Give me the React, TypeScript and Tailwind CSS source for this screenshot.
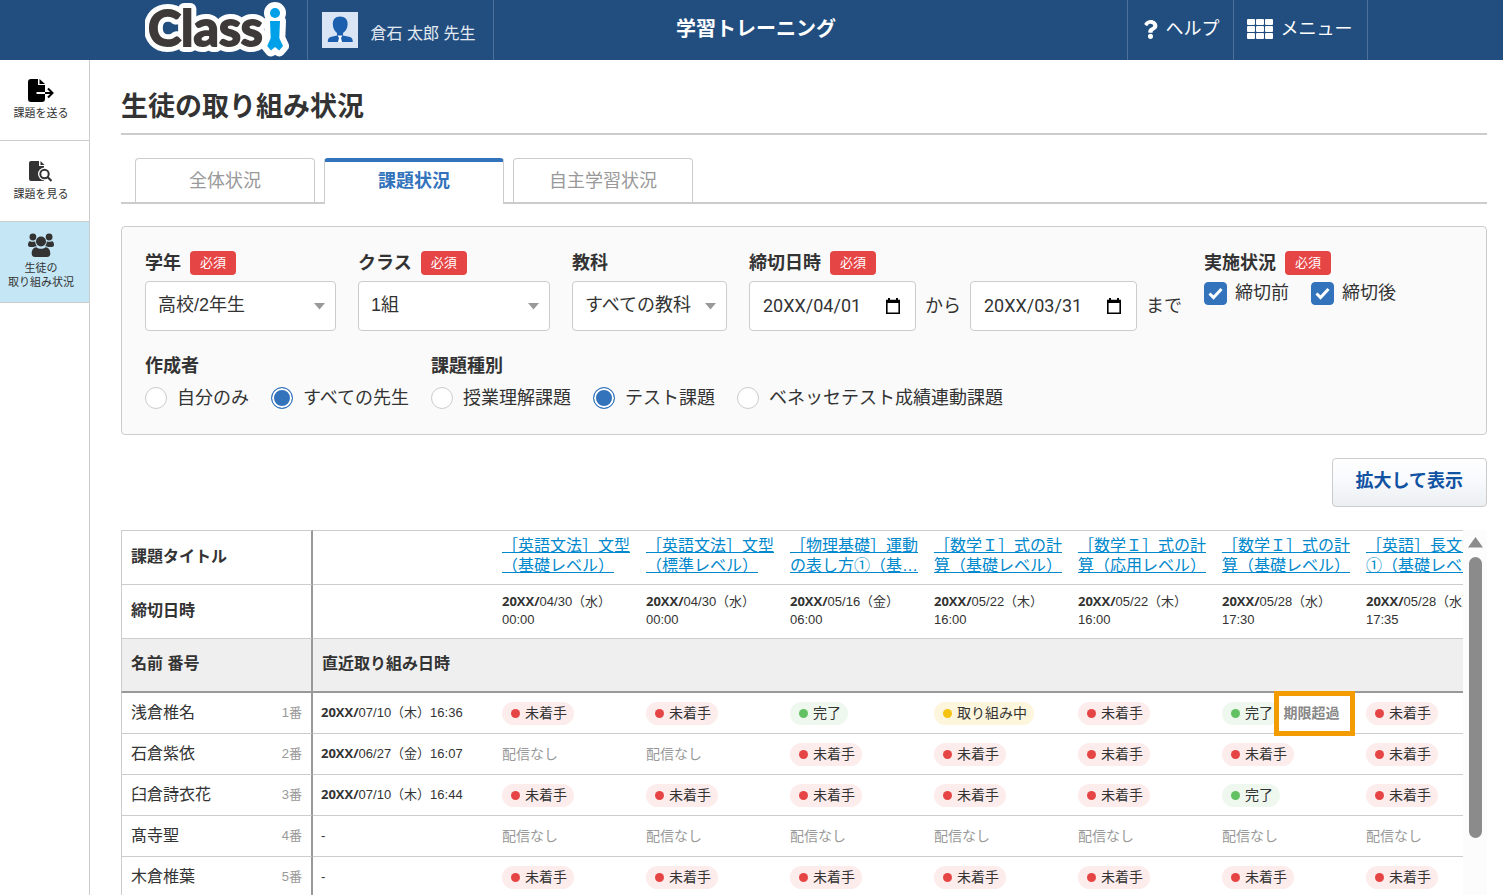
import React from 'react';
import { FaQuestion } from 'react-icons/fa';

type Status = 'todo' | 'done' | 'doing' | 'none' | 'late';

interface Task {
  title: string;
  date: string;
  time: string;
}

interface Student {
  name: string;
  no: string;
  latest: string | null;
  statuses: Status[];
}

const TASKS: Task[] = [
  { title: '［英語文法］文型（基礎レベル）', date: '04/30（水）', time: '00:00' },
  { title: '［英語文法］文型（標準レベル）', date: '04/30（水）', time: '00:00' },
  { title: '［物理基礎］運動の表し方①（基…', date: '05/16（金）', time: '06:00' },
  { title: '［数学Ｉ］式の計算（基礎レベル）', date: '05/22（木）', time: '16:00' },
  { title: '［数学Ｉ］式の計算（応用レベル）', date: '05/22（木）', time: '16:00' },
  { title: '［数学Ｉ］式の計算（基礎レベル）', date: '05/28（水）', time: '17:30' },
  { title: '［英語］長文読解①（基礎レベル）', date: '05/28（水）', time: '17:35' },
];

const STUDENTS: Student[] = [
  { name: '浅倉椎名', no: '1番', latest: '07/10（木）16:36', statuses: ['todo', 'todo', 'done', 'doing', 'todo', 'late', 'todo'] },
  { name: '石倉紫依', no: '2番', latest: '06/27（金）16:07', statuses: ['none', 'none', 'todo', 'todo', 'todo', 'todo', 'todo'] },
  { name: '臼倉詩衣花', no: '3番', latest: '07/10（木）16:44', statuses: ['todo', 'todo', 'todo', 'todo', 'todo', 'done', 'todo'] },
  { name: '髙寺聖', no: '4番', latest: null, statuses: ['none', 'none', 'none', 'none', 'none', 'none', 'none'] },
  { name: '木倉椎葉', no: '5番', latest: null, statuses: ['todo', 'todo', 'todo', 'todo', 'todo', 'todo', 'todo'] },
];

// The figure that stands in for the last letter of the logo
const FIGURE = 'M125 21h10l-.7 17 3.700 8-3.800 4.500-4.200-3.500-4 3.500-3.800-4.500 3.500-8z';

function Logo() {
  return (
    <svg width="148" height="58" viewBox="0 0 148 58" role="img" aria-label="Classi">
      <g stroke="#fff" strokeWidth="12" strokeLinejoin="round" fill="#fff">
        <text x="3" y="46" fontSize="50" fontWeight="700" fontFamily="Lato, sans-serif">Class</text>
        <circle cx="130" cy="13" r="5" />
        <path d={FIGURE} />
      </g>
      <text x="3" y="46" fontSize="50" fontWeight="700" fontFamily="Lato, sans-serif" fill="#3e3a39" stroke="#3e3a39" strokeWidth="2">Class</text>
      <g fill="#00a0e9">
        <circle cx="130" cy="13" r="5" />
        <path d={FIGURE} />
      </g>
    </svg>
  );
}

function Avatar() {
  return (
    <svg width="36" height="36" viewBox="0 0 36 36" aria-hidden="true">
      <rect width="36" height="36" fill="#d9e5f5" />
      <path d="M18 4.500c5 0 7.800 3 7.600 7.500 0 4-1.600 7-4.600 9v2.500l7 1.500c2.200.8 2.800 2.200 2.800 5H5.800c0-2.800.6-4.200 2.800-5l6.400-1.500V21c-2.600-2-4.200-5-4.200-9 0-4.500 2.400-7.500 7.200-7.500z" fill="#1b5fae" />
      <path d="M15.500 23.500h5L19 26l1 4h-4l1-4z" fill="#fff" />
    </svg>
  );
}

function MenuIcon() {
  return (
    <svg width="26" height="20" viewBox="0 0 26 20" fill="#fff" aria-hidden="true">
      {[0, 7, 14].map((y) =>
        [0, 9, 18].map((x) => <rect key={`${x}-${y}`} x={x} y={y} width="8" height="6" rx="1" />)
      )}
    </svg>
  );
}

function SendIcon() {
  return (
    <svg width="26" height="23" viewBox="0 0 26 23" aria-hidden="true">
      <path d="M3 0h7v6h7v14a3 3 0 0 1-3 3H3a3 3 0 0 1-3-3V3a3 3 0 0 1 3-3z" fill="#000" />
      <path d="M11.500 0L17 5h-5.500z" fill="#000" />
      <path d="M8.500 14H17" stroke="#fff" strokeWidth="2" />
      <path d="M17 14h7M20 9.500l4.500 4.500-4.500 4.500" stroke="#000" strokeWidth="2" fill="none" />
    </svg>
  );
}

function SearchFileIcon() {
  return (
    <svg width="24" height="21" viewBox="0 0 24 21" aria-hidden="true">
      <path d="M2 0h8v5h5v15H2a2 2 0 0 1-2-2V2a2 2 0 0 1 2-2z" fill="#333" />
      <path d="M11.500 0l4 4h-4z" fill="#333" />
      <circle cx="15.500" cy="13" r="6.500" fill="#fff" />
      <circle cx="15.500" cy="13" r="4.200" fill="none" stroke="#333" strokeWidth="2" />
      <path d="M18.500 16l4 4" stroke="#333" strokeWidth="2.200" />
    </svg>
  );
}

function GroupIcon() {
  return (
    <svg width="26" height="24" viewBox="0 0 26 24" fill="#333" aria-hidden="true">
      <circle cx="4.900" cy="4" r="3.400" />
      <circle cx="21.100" cy="4" r="3.400" />
      <path d="M2 8.200c2 .9 4 .8 5.200.1 0 2 .6 3.700 1.800 5-1.500 0-2.500.2-3.500.7H2.300C.8 14 0 13.200 0 11.800c0-1.800.6-3.600 2-3.600zM24 8.200c-2 .9-4 .8-5.200.1 0 2-.6 3.700-1.800 5 1.500 0 2.500.2 3.500.7h3.200c1.500 0 2.300-.8 2.300-2.200 0-1.800-.6-3.600-2-3.600z" />
      <circle cx="13" cy="8.500" r="5" />
      <path d="M8.500 14.200c2.800 2 6.200 2 9 0 3.400 0 4.800 3 4.800 6.600 0 2-1.300 3.200-3.300 3.200H7c-2 0-3.300-1.200-3.300-3.200 0-3.600 1.400-6.600 4.800-6.600z" />
    </svg>
  );
}

function SideItem({ icon, active, children }: { icon: React.ReactNode; active?: boolean; children: React.ReactNode }) {
  return (
    <a
      href="#"
      className={`flex h-[81px] flex-col items-center border-b border-[#ccc] pr-[7px] text-center text-[11px] leading-[14px] ${active ? 'bg-[#c5e6f5] pt-[11px]' : 'pt-[18px]'}`}
    >
      <span className="mb-1 flex h-6 items-center">{icon}</span>
      {children}
    </a>
  );
}

function Tab({ active, children }: { active?: boolean; children: React.ReactNode }) {
  return (
    <button
      type="button"
      role="tab"
      aria-selected={!!active}
      className={`w-[180px] rounded-t border-x text-[18px] leading-6 ${
        active
          ? 'h-[46px] border-x-[#ccc] border-t-4 border-t-[#3273bc] bg-white pb-1 font-bold text-[#3273bc]'
          : 'h-11 border-t border-[#ccc] text-[#999]'
      }`}
    >
      {children}
    </button>
  );
}

function Required() {
  return <span className="rounded bg-[#e64545] px-[10px] text-[13px] leading-6 font-normal text-white">必須</span>;
}

function FieldLabel({ htmlFor, required, children }: { htmlFor?: string; required?: boolean; children: React.ReactNode }) {
  const className = 'flex h-6 items-center gap-[9px] text-[18px] leading-6 font-bold';
  const content = (
    <>
      {children}
      {required && <Required />}
    </>
  );
  return htmlFor ? (
    <label htmlFor={htmlFor} className={className}>{content}</label>
  ) : (
    <span className={className}>{content}</span>
  );
}

function SelectField({ id, label, value, required, width }: { id: string; label: string; value: string; required?: boolean; width: string }) {
  return (
    <div className="flex flex-col gap-[6px]">
      <FieldLabel htmlFor={id} required={required}>{label}</FieldLabel>
      <div className="relative">
        <select id={id} className={`h-[50px] appearance-none rounded border border-[#ccc] bg-white pb-[2px] pl-3 text-[18px] ${width}`}>
          <option>{value}</option>
        </select>
        <svg className="pointer-events-none absolute top-[22px] right-[11px]" width="11" height="7" viewBox="0 0 11 7" aria-hidden="true">
          <path d="M0 0h11L5.500 6.500z" fill="#999" />
        </svg>
      </div>
    </div>
  );
}

function DateField({ label, value }: { label: string; value: string }) {
  return (
    <div className="relative">
      <input
        type="text"
        aria-label={label}
        defaultValue={value}
        className="h-[50px] w-[167px] rounded border border-[#ccc] bg-white pb-[2px] pl-[13px] font-[Roboto,'Noto_Sans_CJK_JP',sans-serif] text-[18px]"
      />
      <svg className="pointer-events-none absolute top-4 right-[15px]" width="16" height="18" viewBox="0 0 16 18" aria-hidden="true">
        <path d="M1.800 3.500h12.400v12.700H1.800z" fill="none" stroke="#000" strokeWidth="1.600" />
        <path d="M1 3h14v3H1zM3 1h2v3H3zM11 1h2v3h-2z" fill="#000" />
      </svg>
    </div>
  );
}

function CheckField({ children }: { children: React.ReactNode }) {
  return (
    <label className="flex items-center gap-2 text-[18px] leading-6">
      <span className="relative flex">
        <input type="checkbox" defaultChecked className="peer size-[23px] appearance-none rounded border border-[#ccc] bg-white checked:border-[#3273bc] checked:bg-[#3273bc]" />
        <svg className="pointer-events-none absolute inset-0 hidden peer-checked:block" width="23" height="23" viewBox="0 0 23 23" aria-hidden="true">
          <path d="M5.500 11.500l4 4 8-8.500" fill="none" stroke="#fff" strokeWidth="3" />
        </svg>
      </span>
      {children}
    </label>
  );
}

function RadioField({ name, checked, children }: { name: string; checked?: boolean; children: React.ReactNode }) {
  return (
    <label className="flex items-center gap-[10px] text-[18px] leading-6">
      <input
        type="radio"
        name={name}
        defaultChecked={checked}
        className="size-[22px] appearance-none rounded-full border border-[#ccc] bg-white checked:border-[#3273bc] checked:bg-[#3273bc] checked:shadow-[inset_0_0_0_2px_#fff]"
      />
      {children}
    </label>
  );
}

const BADGES = {
  todo: { label: '未着手', box: 'bg-[#fdecec]', dot: 'bg-[#e64545]' },
  done: { label: '完了', box: 'bg-[#eff8ef]', dot: 'bg-[#62c162]' },
  doing: { label: '取り組み中', box: 'bg-[#fdf6dc]', dot: 'bg-[#f5c211]' },
};

function StatusBadge({ status }: { status: Status }) {
  if (status === 'none') {
    return <span className="text-[14px] text-[#999]">配信なし</span>;
  }
  const badge = BADGES[status === 'late' ? 'done' : status];
  return (
    <span className="relative inline-flex align-middle">
      <span className={`inline-flex h-[23px] items-center gap-[5px] rounded-full pr-[7px] pl-[9px] text-[14px] leading-5 whitespace-nowrap ${badge.box}`}>
        <span className={`size-[9px] rounded-full ${badge.dot}`} />
        {badge.label}
      </span>
      {status === 'late' && (
        <span className="absolute -top-[11px] left-[52px] flex h-[45px] w-[81px] items-center justify-center border-[5px] border-[#f39c00] bg-white pr-[6px] text-[14px] font-bold whitespace-nowrap text-[#888]">
          期限超過
        </span>
      )}
    </span>
  );
}

function Year() {
  return <span className="font-['Open_Sans',sans-serif] font-bold">20XX/</span>;
}

function TaskTable() {
  const nameCell = 'border-r-2 border-l border-r-[#999] border-l-[#ccc] px-[9px] text-left';
  return (
    <table className="w-[1379px] table-fixed border-separate border-spacing-0">
      <colgroup>
        <col className="w-[192px]" />
        <col className="w-[179px]" />
        {TASKS.map((_, i) => (
          <col key={i} className="w-[144px]" />
        ))}
      </colgroup>
      <thead>
        <tr className="h-[55px]">
          <th className={`border-y border-y-[#ccc] pb-[2px] text-[16px] ${nameCell}`}>課題タイトル</th>
          <td className="border-y border-[#ccc]" />
          {TASKS.map((task, i) => (
            <td key={i} className="border-y border-[#ccc] pr-[6px] pb-1 pl-[10px] text-[16px] leading-5">
              <a href="#" className="line-clamp-2 text-[#0088cc] underline">{task.title}</a>
            </td>
          ))}
        </tr>
        <tr className="h-[54px]">
          <th className={`border-b border-b-[#ccc] pb-[2px] text-[16px] ${nameCell}`}>締切日時</th>
          <td className="border-b border-[#ccc]" />
          {TASKS.map((task, i) => (
            <td key={i} className="border-b border-[#ccc] pb-[2px] pl-[10px] text-[13px] leading-[18px]">
              <Year />
              {task.date}
              <br />
              {task.time}
            </td>
          ))}
        </tr>
        <tr className="h-[54px] bg-[#efefef]">
          <th className={`border-b-2 border-b-[#999] pb-[2px] text-[16px] ${nameCell}`}>名前 番号</th>
          <th colSpan={8} className="border-b-2 border-[#999] px-[9px] pb-[2px] text-left text-[16px]">直近取り組み日時</th>
        </tr>
      </thead>
      <tbody>
        {STUDENTS.map((student) => (
          <tr key={student.no} className="h-[41px]">
            <th className={`border-b border-b-[#ccc] font-normal ${nameCell}`}>
              <div className="flex items-center justify-between">
                <span className="text-[16px] leading-5">{student.name}</span>
                <span className="text-[13px] leading-5 text-[#999]">{student.no}</span>
              </div>
            </th>
            <td className="border-b border-[#ccc] pl-2 text-[13px]">
              {student.latest ? (
                <>
                  <Year />
                  {student.latest}
                </>
              ) : (
                '-'
              )}
            </td>
            {student.statuses.map((status, i) => (
              <td key={i} className="border-b border-[#ccc] pl-[10px] leading-none">
                <StatusBadge status={status} />
              </td>
            ))}
          </tr>
        ))}
      </tbody>
    </table>
  );
}

export default function App() {
  return (
    <div className="flex h-screen flex-col overflow-hidden bg-white font-['Liberation_Sans','Noto_Sans_CJK_JP',sans-serif] text-[#333]">
      <header className="h-[60px] shrink-0 bg-[#224e7f] pl-[9px] text-white">
        <div className="mx-auto grid h-full max-w-[1223px] grid-cols-[1fr_auto_1fr]">
          <div className="flex">
            <a href="#" className="w-[162px]">
              <Logo />
            </a>
            <div className="flex items-center gap-[13px] border-x border-[#4f7199] pr-[18px] pl-[14px]">
              <Avatar />
              <span className="pt-2 text-[16px] leading-5 whitespace-nowrap text-[#e3eaf2]">倉石 太郎 先生</span>
            </div>
          </div>
          <div className="flex items-center pb-[2px] text-[20px] font-bold">学習トレーニング</div>
          <nav className="flex justify-end text-[18px]">
            <a href="#" className="flex items-center gap-[6px] border-l border-[#4f7199] px-[13px] pb-[2px]">
              <FaQuestion size={19} />
              ヘルプ
            </a>
            <a href="#" className="flex items-center gap-2 border-x border-[#4f7199] pr-[14px] pl-[13px] pb-[2px]">
              <MenuIcon />
              メニュー
            </a>
          </nav>
        </div>
      </header>

      <div className="flex min-h-0 flex-1">
        <nav className="w-[90px] shrink-0 border-r border-[#ccc]">
          <SideItem icon={<SendIcon />}>課題を送る</SideItem>
          <SideItem icon={<SearchFileIcon />}>課題を見る</SideItem>
          <SideItem icon={<GroupIcon />} active>
            生徒の
            <br />
            取り組み状況
          </SideItem>
        </nav>

        <main className="flex min-w-0 flex-1 flex-col pr-4 pl-[31px]">
          <h1 className="border-b-2 border-[#ccc] pt-[29px] pb-2 text-[27px] leading-9 font-bold">生徒の取り組み状況</h1>

          <div role="tablist" className="mt-[23px] flex h-[46px] shrink-0 gap-[9px] bg-[linear-gradient(#ccc,#ccc)] bg-[length:100%_2px] bg-bottom bg-no-repeat pl-[14px]">
            <Tab>全体状況</Tab>
            <Tab active>課題状況</Tab>
            <Tab>自主学習状況</Tab>
          </div>

          <form className="mt-[22px] rounded border border-[#ccc] bg-[#fafafa] px-[23px] pt-6 pb-6">
            <div className="flex gap-[22px]">
              <SelectField id="grade" label="学年" value="高校/2年生" required width="w-[191px]" />
              <SelectField id="class" label="クラス" value="1組" required width="w-[192px]" />
              <SelectField id="subject" label="教科" value="すべての教科" width="w-[155px]" />
              <div className="flex flex-col gap-[6px]">
                <FieldLabel required>締切日時</FieldLabel>
                <div className="flex items-center gap-[9px] text-[18px] whitespace-nowrap">
                  <DateField label="締切日時（開始）" value="20XX/04/01" />
                  から
                  <DateField label="締切日時（終了）" value="20XX/03/31" />
                  まで
                </div>
              </div>
              <div className="flex flex-col gap-[6px]">
                <FieldLabel required>実施状況</FieldLabel>
                <div className="flex gap-[22px] whitespace-nowrap">
                  <CheckField>締切前</CheckField>
                  <CheckField>締切後</CheckField>
                </div>
              </div>
            </div>
            <div className="mt-[23px] flex gap-[22px]">
              <fieldset>
                <legend className="text-[18px] leading-6 font-bold">作成者</legend>
                <div className="mt-2 flex gap-[22px]">
                  <RadioField name="author">自分のみ</RadioField>
                  <RadioField name="author" checked>すべての先生</RadioField>
                </div>
              </fieldset>
              <fieldset>
                <legend className="text-[18px] leading-6 font-bold">課題種別</legend>
                <div className="mt-2 flex gap-[22px]">
                  <RadioField name="kind">授業理解課題</RadioField>
                  <RadioField name="kind" checked>テスト課題</RadioField>
                  <RadioField name="kind">ベネッセテスト成績連動課題</RadioField>
                </div>
              </fieldset>
            </div>
          </form>

          <button
            type="button"
            className="mt-[23px] h-[49px] shrink-0 self-end rounded border border-[#ccc] bg-linear-to-b from-white via-[#f7f9fc] to-[#eceff2] px-[23px] pb-[2px] text-[18px] font-bold text-[#1152a3]"
          >
            拡大して表示
          </button>

          <div className="mt-[23px] flex min-h-0 flex-1">
            <div className="min-w-0 flex-1 overflow-hidden">
              <TaskTable />
            </div>
            <div className="flex w-6 shrink-0 flex-col items-center bg-[#fcfcfc] pt-[7px]">
              <svg width="15" height="11" viewBox="0 0 15 11" aria-hidden="true">
                <path d="M7.500 0L15 10.500H0z" fill="#8b8b8b" />
              </svg>
              <div className="mt-[9px] h-[281px] w-[13px] rounded-full bg-[#8b8b8b]" />
            </div>
          </div>
        </main>
      </div>
    </div>
  );
}
